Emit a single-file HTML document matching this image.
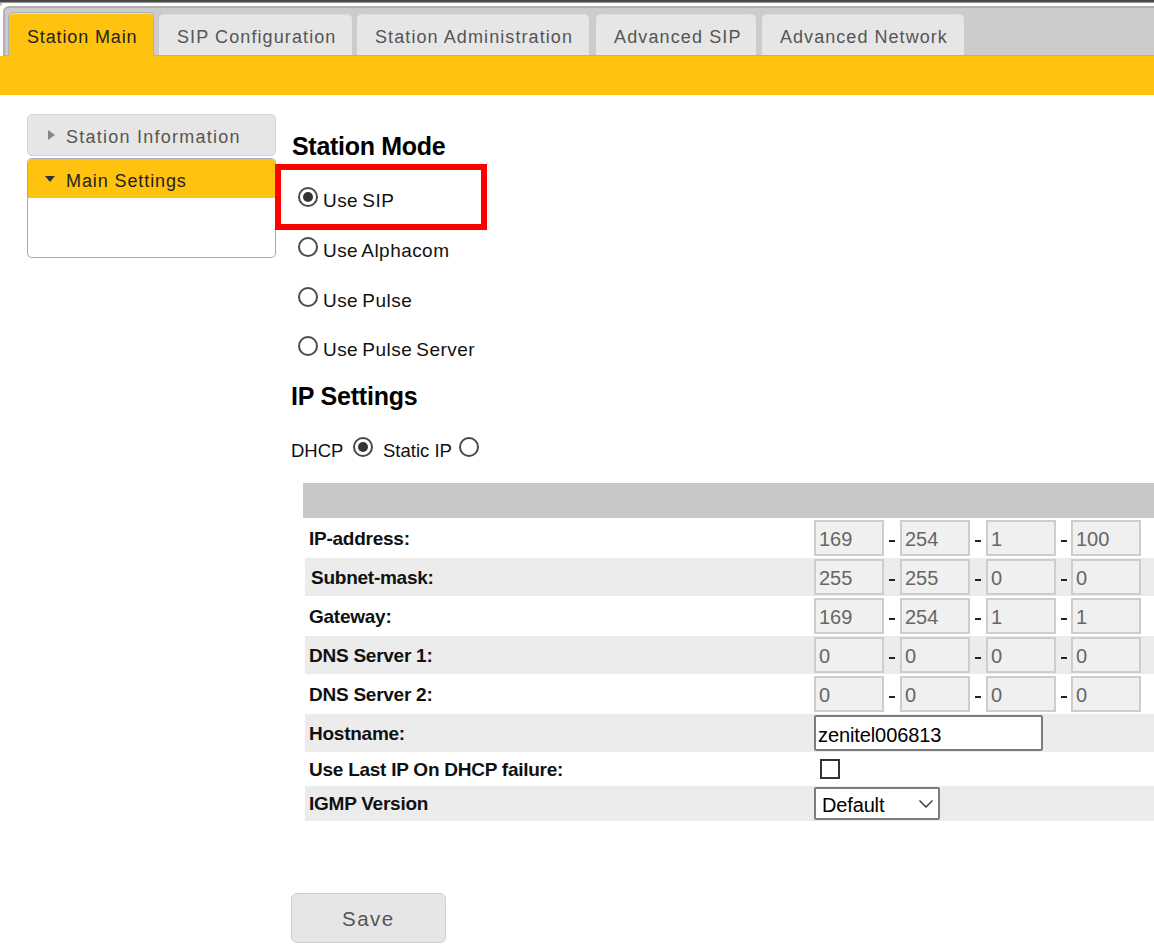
<!DOCTYPE html>
<html><head><meta charset="utf-8">
<style>
html,body{margin:0;padding:0;background:#fff;width:1154px;height:951px;overflow:hidden;position:relative;font-family:"Liberation Sans",sans-serif;}
div,span{box-sizing:border-box;}
.a{position:absolute;}
.t{position:absolute;white-space:nowrap;line-height:1;}
#topstrip{left:0;top:0;width:1154px;height:3px;background:linear-gradient(#3c3c3c,#555 60%,#bbb);}
#nav{left:3px;top:6px;width:1160px;height:50px;background:#cccccc;border-top:2px solid #b0b0b0;border-left:2px solid #b0b0b0;border-top-left-radius:6px;}
#navline{left:5px;top:55px;width:1154px;height:1px;background:#abaebb;}
.tab{position:absolute;top:14px;height:41px;background:#e6e6e6;border-top-left-radius:5px;border-top-right-radius:5px;box-shadow:inset 0 1px 0 #ddd;}
.tab.act{top:12px;height:44px;background:#ffc20f;border:1px solid #a9b0c0;border-bottom:none;}
.tabt{position:absolute;top:27.5px;font-size:18px;color:#555;letter-spacing:1.1px;line-height:1;white-space:nowrap;}
#ybar{left:0;top:56px;width:1154px;height:39px;background:#ffc20f;}
.radio{position:absolute;width:20.5px;height:20.5px;margin:-0.25px 0 0 -0.25px;border:2px solid #4a4a4a;border-radius:50%;background:#fff;}
.radio.on::after{content:"";position:absolute;left:3px;top:3px;width:10.5px;height:10.5px;border-radius:50%;background:#333;}
.lbl{position:absolute;font-weight:bold;font-size:19px;letter-spacing:-0.25px;color:#111;white-space:nowrap;line-height:1;}
.row{position:absolute;left:305px;width:849px;background:#ececec;}
.ip{position:absolute;width:70px;height:36px;background:#f0f0f0;border:2px solid #cdcdcd;}
.ipt{position:absolute;font-size:20px;color:#666;line-height:1;white-space:nowrap;}
.dash{position:absolute;width:6px;height:2px;background:#222;}
</style></head><body>
<div class="a" id="topstrip"></div>
<div class="a" style="left:0;top:2.5px;width:2px;height:3px;background:#bdbdbd;border-radius:0 0 2px 0;"></div>
<div class="a" id="nav"></div>
<div class="a" id="navline"></div>

<div class="tab act" style="left:8px;width:146px;"></div>
<div class="tab" style="left:159px;width:193px;"></div>
<div class="tab" style="left:357px;width:232px;"></div>
<div class="tab" style="left:596px;width:160px;"></div>
<div class="tab" style="left:762px;width:202px;"></div>
<div class="tabt" style="left:27px;color:#222;letter-spacing:0.86px;">Station Main</div>
<div class="tabt" style="left:177px;letter-spacing:1.1px;">SIP Configuration</div>
<div class="tabt" style="left:375px;letter-spacing:1.09px;">Station Administration</div>
<div class="tabt" style="left:614px;letter-spacing:1.13px;">Advanced SIP</div>
<div class="tabt" style="left:780px;letter-spacing:1.05px;">Advanced Network</div>

<div class="a" id="ybar"></div>

<!-- sidebar -->
<div class="a" style="left:27px;top:114px;width:249px;height:42px;background:#e6e6e6;border:1px solid #d3d3d3;border-radius:5px;"></div>
<div class="a" style="left:48px;top:129.5px;width:0;height:0;border-top:5.75px solid transparent;border-bottom:5.75px solid transparent;border-left:7px solid #868686;"></div>
<div class="tabt" style="left:66px;top:128px;letter-spacing:1.24px;">Station Information</div>
<div class="a" style="left:27px;top:158px;width:249px;height:99.5px;background:#fff;border:1px solid #aaa;border-top-color:#a9b0c0;border-radius:5px;overflow:hidden;">
  <div class="a" style="left:0;top:0;width:249px;height:39px;background:#ffc20f;"></div>
</div>
<div class="a" style="left:45px;top:176px;width:0;height:0;border-left:5.5px solid transparent;border-right:5.5px solid transparent;border-top:6.5px solid #2e3240;"></div>
<div class="tabt" style="left:66px;top:172px;color:#222;letter-spacing:0.9px;">Main Settings</div>

<!-- Station mode -->
<div class="t" style="left:292px;top:134px;font-weight:bold;font-size:25px;letter-spacing:-0.3px;color:#000;">Station Mode</div>
<div class="a" style="left:275px;top:164px;width:212px;height:66px;border:6px solid #ff0000;"></div>
<div class="radio on" style="left:298px;top:187px;"></div>
<div class="t" style="left:323px;top:191px;font-size:19px;letter-spacing:0.45px;word-spacing:-1.5px;color:#111;">Use SIP</div>
<div class="radio" style="left:298px;top:237px;"></div>
<div class="t" style="left:323px;top:241px;font-size:19px;letter-spacing:0.45px;word-spacing:-1.5px;color:#111;">Use Alphacom</div>
<div class="radio" style="left:298px;top:287px;"></div>
<div class="t" style="left:323px;top:291px;font-size:19px;letter-spacing:0.45px;word-spacing:-1.5px;color:#111;">Use Pulse</div>
<div class="radio" style="left:298px;top:336px;"></div>
<div class="t" style="left:323px;top:340px;font-size:19px;letter-spacing:0.45px;word-spacing:-1.5px;color:#111;">Use Pulse Server</div>

<!-- IP settings -->
<div class="t" style="left:291px;top:384px;font-weight:bold;font-size:25px;letter-spacing:-0.2px;color:#000;">IP Settings</div>
<div class="t" style="left:291px;top:442px;font-size:18.5px;color:#111;">DHCP</div>
<div class="radio on" style="left:353px;top:437px;"></div>
<div class="t" style="left:383px;top:442px;font-size:18.5px;color:#111;">Static IP</div>
<div class="radio" style="left:459px;top:437px;"></div>

<!-- table -->
<div class="a" style="left:303px;top:483px;width:851px;height:35px;background:#c8c8c8;"></div>
<div class="row" style="top:558px;height:38px;"></div>
<div class="row" style="top:636px;height:38px;"></div>
<div class="row" style="top:714px;height:38px;"></div>
<div class="row" style="top:786px;height:35px;"></div>

<div class="lbl" style="left:309px;top:529px;">IP-address:</div>
<div class="lbl" style="left:311px;top:568px;">Subnet-mask:</div>
<div class="lbl" style="left:309px;top:607px;">Gateway:</div>
<div class="lbl" style="left:309px;top:646px;">DNS Server 1:</div>
<div class="lbl" style="left:309px;top:685px;">DNS Server 2:</div>
<div class="lbl" style="left:309px;top:724px;">Hostname:</div>
<div class="lbl" style="left:309px;top:760px;">Use Last IP On DHCP failure:</div>
<div class="lbl" style="left:309px;top:794px;">IGMP Version</div>

<div class="ip" style="left:814px;top:520px;"></div>
<div class="ipt" style="left:819px;top:529px;">169</div>
<div class="dash" style="left:889px;top:540px;"></div>
<div class="ip" style="left:900px;top:520px;"></div>
<div class="ipt" style="left:905px;top:529px;">254</div>
<div class="dash" style="left:975px;top:540px;"></div>
<div class="ip" style="left:986px;top:520px;"></div>
<div class="ipt" style="left:991px;top:529px;">1</div>
<div class="dash" style="left:1061px;top:540px;"></div>
<div class="ip" style="left:1071px;top:520px;"></div>
<div class="ipt" style="left:1076px;top:529px;">100</div>
<div class="ip" style="left:814px;top:559px;"></div>
<div class="ipt" style="left:819px;top:568px;">255</div>
<div class="dash" style="left:889px;top:579px;"></div>
<div class="ip" style="left:900px;top:559px;"></div>
<div class="ipt" style="left:905px;top:568px;">255</div>
<div class="dash" style="left:975px;top:579px;"></div>
<div class="ip" style="left:986px;top:559px;"></div>
<div class="ipt" style="left:991px;top:568px;">0</div>
<div class="dash" style="left:1061px;top:579px;"></div>
<div class="ip" style="left:1071px;top:559px;"></div>
<div class="ipt" style="left:1076px;top:568px;">0</div>
<div class="ip" style="left:814px;top:598px;"></div>
<div class="ipt" style="left:819px;top:607px;">169</div>
<div class="dash" style="left:889px;top:618px;"></div>
<div class="ip" style="left:900px;top:598px;"></div>
<div class="ipt" style="left:905px;top:607px;">254</div>
<div class="dash" style="left:975px;top:618px;"></div>
<div class="ip" style="left:986px;top:598px;"></div>
<div class="ipt" style="left:991px;top:607px;">1</div>
<div class="dash" style="left:1061px;top:618px;"></div>
<div class="ip" style="left:1071px;top:598px;"></div>
<div class="ipt" style="left:1076px;top:607px;">1</div>
<div class="ip" style="left:814px;top:637px;"></div>
<div class="ipt" style="left:819px;top:646px;">0</div>
<div class="dash" style="left:889px;top:657px;"></div>
<div class="ip" style="left:900px;top:637px;"></div>
<div class="ipt" style="left:905px;top:646px;">0</div>
<div class="dash" style="left:975px;top:657px;"></div>
<div class="ip" style="left:986px;top:637px;"></div>
<div class="ipt" style="left:991px;top:646px;">0</div>
<div class="dash" style="left:1061px;top:657px;"></div>
<div class="ip" style="left:1071px;top:637px;"></div>
<div class="ipt" style="left:1076px;top:646px;">0</div>
<div class="ip" style="left:814px;top:676px;"></div>
<div class="ipt" style="left:819px;top:685px;">0</div>
<div class="dash" style="left:889px;top:696px;"></div>
<div class="ip" style="left:900px;top:676px;"></div>
<div class="ipt" style="left:905px;top:685px;">0</div>
<div class="dash" style="left:975px;top:696px;"></div>
<div class="ip" style="left:986px;top:676px;"></div>
<div class="ipt" style="left:991px;top:685px;">0</div>
<div class="dash" style="left:1061px;top:696px;"></div>
<div class="ip" style="left:1071px;top:676px;"></div>
<div class="ipt" style="left:1076px;top:685px;">0</div>


<div class="a" style="left:814px;top:715px;width:229px;height:36px;background:#fff;border:2px solid #7c7c7c;border-radius:2px;"></div>
<div class="t" style="left:818px;top:725px;font-size:20px;letter-spacing:-0.1px;color:#111;color:#000;">zenitel006813</div>
<div class="a" style="left:820px;top:759px;width:20px;height:20px;border:2px solid #333;background:#fff;"></div>
<div class="a" style="left:814px;top:787px;width:126px;height:33px;background:#fff;border:2px solid #7c7c7c;border-radius:2px;"></div>
<div class="t" style="left:822px;top:795px;font-size:20px;letter-spacing:-0.15px;color:#111;color:#000;">Default</div>
<svg class="a" style="left:918px;top:798px;" width="16" height="12" viewBox="0 0 16 12"><path d="M1.5 2.5 L8 9 L14.5 2.5" fill="none" stroke="#333" stroke-width="1.4"/></svg>

<!-- save -->
<div class="a" style="left:291px;top:893px;width:155px;height:50px;background:#e6e6e6;border:1px solid #cfcfcf;border-radius:6px;"></div>
<div class="t" style="left:342px;top:908.5px;font-size:20.5px;color:#555;letter-spacing:1.5px;">Save</div>


</body></html>
